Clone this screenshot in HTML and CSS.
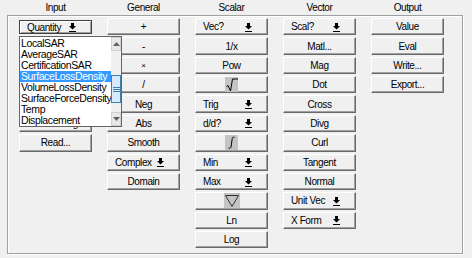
FILE: index.html
```html
<!DOCTYPE html>
<html>
<head>
<meta charset="utf-8">
<link rel="stylesheet" href="styles.css">
</head>
<body>
<div class="heads">
  <span>Input</span><span>General</span><span>Scalar</span><span>Vector</span><span>Output</span>
</div>
<div class="frame">
  <div class="cols">
    <div class="col">
      <div class="btn drop quantity"><span>Quantity</span><svg class="arr" width="7" height="9" viewBox="0 0 7 9"><path d="M2 0h3v3h2L3.5 6.5 0 3h2z"/><rect y="8" width="7" height="1"/></svg></div>
      <div class="spacer"></div>
      <div class="spacer"></div>
      <div class="spacer"></div>
      <div class="spacer"></div>
      <div class="btn">Geom Settings...</div>
      <div class="btn">Read...</div>
    </div>
    <div class="col">
      <div class="btn">+</div>
      <div class="btn">-</div>
      <div class="btn small">×</div>
      <div class="btn">/</div>
      <div class="btn">Neg</div>
      <div class="btn">Abs</div>
      <div class="btn">Smooth</div>
      <div class="btn drop"><span>Complex</span><svg class="arr" width="7" height="9" viewBox="0 0 7 9"><path d="M2 0h3v3h2L3.5 6.5 0 3h2z"/><rect y="8" width="7" height="1"/></svg></div>
      <div class="btn">Domain</div>
    </div>
    <div class="col">
      <div class="btn drop"><span>Vec?</span><svg class="arr" width="7" height="9" viewBox="0 0 7 9"><path d="M2 0h3v3h2L3.5 6.5 0 3h2z"/><rect y="8" width="7" height="1"/></svg></div>
      <div class="btn">1/x</div>
      <div class="btn">Pow</div>
      <div class="btn"><svg class="glyph" width="13" height="15" viewBox="0 0 13 15"><rect width="13" height="15" fill="#c4c4c4"/><path d="M1.5 9.5l1.5-1 2.5 5.5 2-12h5.5" fill="none" stroke="#000" stroke-width="1"/></svg></div>
      <div class="btn drop"><span>Trig</span><svg class="arr" width="7" height="9" viewBox="0 0 7 9"><path d="M2 0h3v3h2L3.5 6.5 0 3h2z"/><rect y="8" width="7" height="1"/></svg></div>
      <div class="btn drop"><span>d/d?</span><svg class="arr" width="7" height="9" viewBox="0 0 7 9"><path d="M2 0h3v3h2L3.5 6.5 0 3h2z"/><rect y="8" width="7" height="1"/></svg></div>
      <div class="btn"><svg class="glyph" width="13" height="15" viewBox="0 0 13 15"><rect width="13" height="15" fill="#c4c4c4"/><path d="M9.5 2.5C8 1.5 7.3 2.5 7 5L6.2 11C5.9 13 5 13.8 3.5 13" fill="none" stroke="#000" stroke-width="1"/></svg></div>
      <div class="btn drop"><span>Min</span><svg class="arr" width="7" height="9" viewBox="0 0 7 9"><path d="M2 0h3v3h2L3.5 6.5 0 3h2z"/><rect y="8" width="7" height="1"/></svg></div>
      <div class="btn drop"><span>Max</span><svg class="arr" width="7" height="9" viewBox="0 0 7 9"><path d="M2 0h3v3h2L3.5 6.5 0 3h2z"/><rect y="8" width="7" height="1"/></svg></div>
      <div class="btn"><svg class="glyph" width="16" height="15" viewBox="0 0 16 15"><rect width="16" height="15" fill="#c4c4c4"/><path d="M1.5 2.5h13L8 13.5z" fill="none" stroke="#333" stroke-width="1"/></svg></div>
      <div class="btn">Ln</div>
      <div class="btn">Log</div>
    </div>
    <div class="col">
      <div class="btn drop"><span>Scal?</span><svg class="arr" width="7" height="9" viewBox="0 0 7 9"><path d="M2 0h3v3h2L3.5 6.5 0 3h2z"/><rect y="8" width="7" height="1"/></svg></div>
      <div class="btn">Matl...</div>
      <div class="btn">Mag</div>
      <div class="btn">Dot</div>
      <div class="btn">Cross</div>
      <div class="btn">Divg</div>
      <div class="btn">Curl</div>
      <div class="btn">Tangent</div>
      <div class="btn">Normal</div>
      <div class="btn drop"><span>Unit Vec</span><svg class="arr" width="7" height="9" viewBox="0 0 7 9"><path d="M2 0h3v3h2L3.5 6.5 0 3h2z"/><rect y="8" width="7" height="1"/></svg></div>
      <div class="btn drop"><span>X Form</span><svg class="arr" width="7" height="9" viewBox="0 0 7 9"><path d="M2 0h3v3h2L3.5 6.5 0 3h2z"/><rect y="8" width="7" height="1"/></svg></div>
    </div>
    <div class="col">
      <div class="btn">Value</div>
      <div class="btn">Eval</div>
      <div class="btn">Write...</div>
      <div class="btn">Export...</div>
    </div>
  </div>
  <div class="listbox">
    <div class="items">
      <div class="item">LocalSAR</div>
      <div class="item">AverageSAR</div>
      <div class="item">CertificationSAR</div>
      <div class="item sel">SurfaceLossDensity</div>
      <div class="item">VolumeLossDensity</div>
      <div class="item">SurfaceForceDensity</div>
      <div class="item">Temp</div>
      <div class="item">Displacement</div>
    </div>
    <div class="sbar">
      <div class="sbtn"><svg width="7" height="4" viewBox="0 0 7 4"><path d="M0 4L3.5 0 7 4z" fill="#606060"/></svg></div>
      <div class="track">
        <div class="thumb"><svg width="7" height="5" viewBox="0 0 7 5"><path d="M0 0.5h7M0 2.5h7M0 4.5h7" stroke="#3c7fb1" stroke-width="1"/></svg></div>
      </div>
      <div class="sbtn"><svg width="7" height="4" viewBox="0 0 7 4"><path d="M0 0L3.5 4 7 0z" fill="#606060"/></svg></div>
    </div>
  </div>
</div>
</body>
</html>
```
FILE: styles.css
```css
html, body {
  margin: 0;
  padding: 0;
  background: #f0f0f0;
  width: 472px;
  height: 258px;
  overflow: hidden;
  font-family: "Liberation Sans", Arial, sans-serif;
  font-size: 10px;
  letter-spacing: -0.4px;
  color: #000;
}

.heads {
  display: grid;
  grid-template-columns: repeat(5, 73px);
  column-gap: 15px;
  padding-left: 19px;
  height: 15px;
  line-height: 16px;
}

.heads span {
  text-align: center;
}

.frame {
  position: relative;
  box-sizing: border-box;
  margin-left: 7px;
  width: 456px;
  height: 239px;
  border: 1px solid #a0a0a0;
  box-shadow: 1px 1px 0 #fff, inset 1px 1px 0 #fff;
}

.cols {
  display: grid;
  grid-template-columns: repeat(5, 73px);
  column-gap: 15px;
  padding: 2px 0 0 11px;
  align-items: start;
}

.col {
  display: grid;
  grid-auto-rows: 17.36px;
  row-gap: 2px;
}

.btn {
  box-sizing: border-box;
  display: flex;
  align-items: center;
  justify-content: center;
  background: #f0f0f0;
  border-top: 1px solid #fff;
  border-left: 1px solid #fff;
  border-right: 1px solid #696969;
  border-bottom: 1px solid #696969;
  box-shadow: inset -1px -1px 0 #a0a0a0;
  white-space: nowrap;
  overflow: hidden;
}

.btn.drop {
  justify-content: space-between;
  padding: 0 15px 0 7px;
}

.btn.small {
  font-size: 8px;
}

.arr {
  fill: #000;
  margin-top: 1px;
  flex: none;
}

.quantity {
  margin: 2px 0 1px;
  border: 1px solid #404040;
  box-shadow: inset 1px 1px 0 #fff, inset -1px -1px 0 #a0a0a0;
  padding-left: 4px;
  padding-right: 16px;
}

.glyph {
  display: block;
}

.listbox {
  position: absolute;
  left: 11px;
  top: 20px;
  width: 103px;
  height: 91px;
  box-sizing: border-box;
  border: 1px solid #646464;
  background: #fff;
  display: flex;
}

.items {
  flex: 1;
  padding-top: 1px;
  font-size: 10.5px;
}

.item {
  height: 11px;
  line-height: 11px;
  padding-left: 1px;
  white-space: nowrap;
}

.item.sel {
  background: #3399ff;
  color: #fff;
}

.sbar {
  width: 14px;
  display: flex;
  flex-direction: column;
  background: #f0f0f0;
}

.sbtn {
  height: 14px;
  box-sizing: border-box;
  border: 1px solid #d0d0d0;
  background: #e8e8e8;
  display: flex;
  align-items: center;
  justify-content: center;
}

.track {
  flex: 1;
  display: flex;
  flex-direction: column;
  padding-top: 24px;
}

.thumb {
  height: 28px;
  box-sizing: border-box;
  border: 1px solid #3c7fb1;
  background: #d8eaf9;
  display: flex;
  align-items: center;
  justify-content: center;
}
```
